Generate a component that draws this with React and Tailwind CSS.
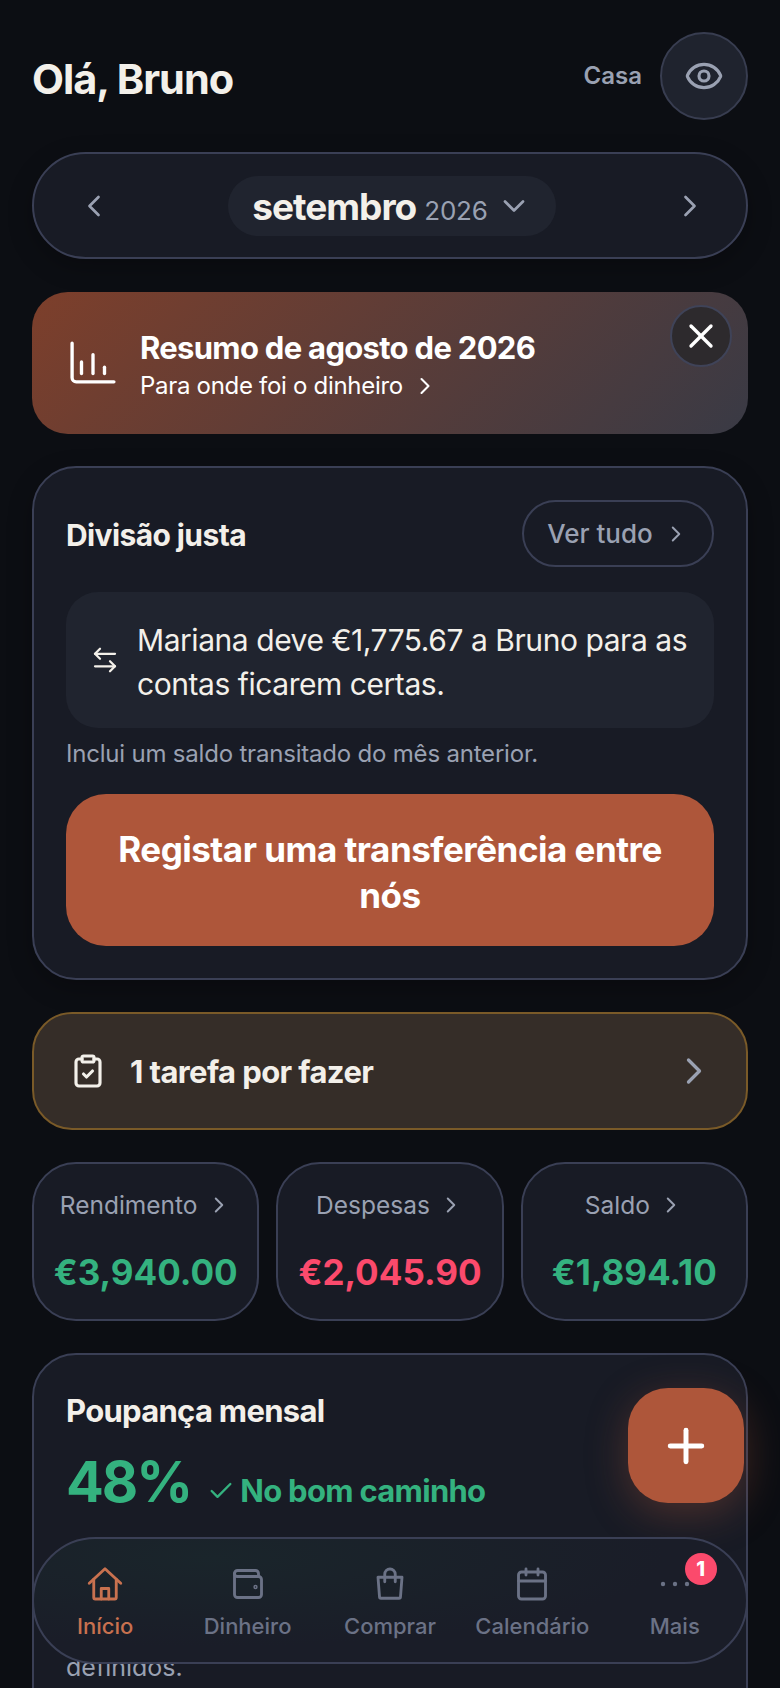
import React from 'react';
import { Eye, ChevronLeft, ChevronRight, ChevronDown, X, ArrowLeftRight, ClipboardCheck, Check, Plus, Calendar } from 'lucide-react';

// Icons the package has no close match for
const BarsIcon = () => (
  <svg width="46" height="46" viewBox="0 0 44 44" fill="none" stroke="currentColor" strokeWidth="3.2" strokeLinecap="round" strokeLinejoin="round">
    <path d="M2 3v33a4 4 0 0 0 4 4h36" />
    <path d="M11 21v11" />
    <path d="M22 14v18" />
    <path d="M33 26v6" />
  </svg>
);

const HomeIcon = () => (
  <svg width="36" height="36" viewBox="0 0 24 24" fill="none" stroke="currentColor" strokeWidth="1.9" strokeLinecap="round" strokeLinejoin="round">
    <path d="M1.5 11.5 12 1.8l10.5 9.7" />
    <path d="M4.5 9v12a1 1 0 0 0 1 1h13a1 1 0 0 0 1-1V9" />
    <path d="M9.5 22v-7h5v7" />
  </svg>
);

const WalletIcon = () => (
  <svg width="36" height="36" viewBox="0 0 24 24" fill="none" stroke="currentColor" strokeWidth="1.9" strokeLinecap="round" strokeLinejoin="round">
    <path d="M5 7h14a2 2 0 0 1 2 2v10a2 2 0 0 1-2 2H5a2 2 0 0 1-2-2V5a2 2 0 0 1 2-2h12a2 2 0 0 1 2 2v2" />
    <path d="M3 5a2 2 0 0 0 2 2" />
    <circle cx="17" cy="14" r="0.5" />
  </svg>
);

const BagIcon = () => (
  <svg width="36" height="36" viewBox="0 0 24 24" fill="none" stroke="currentColor" strokeWidth="1.9" strokeLinecap="round" strokeLinejoin="round">
    <path d="M4 7.5h16l-1 13a1 1 0 0 1-1 1H6a1 1 0 0 1-1-1z" />
    <path d="M8.5 10.5V5.5a3.5 3.5 0 0 1 7 0v5" />
  </svg>
);

const DotsIcon = () => (
  <svg width="36" height="36" viewBox="0 0 36 36" fill="currentColor">
    <circle cx="6" cy="18" r="2.2" />
    <circle cx="18" cy="18" r="2.2" />
    <circle cx="30" cy="18" r="2.2" />
  </svg>
);

const stats = [
  { label: 'Rendimento', value: '€3,940.00', color: 'text-[#34b27f]' },
  { label: 'Despesas', value: '€2,045.90', color: 'text-[#fb4a6c]' },
  { label: 'Saldo', value: '€1,894.10', color: 'text-[#34b27f]' },
];

const navItems = [
  { label: 'Início', icon: <HomeIcon />, active: true },
  { label: 'Dinheiro', icon: <WalletIcon /> },
  { label: 'Comprar', icon: <BagIcon /> },
  { label: 'Calendário', icon: <Calendar size={36} strokeWidth={1.9} /> },
  { label: 'Mais', icon: <DotsIcon />, badge: 1 },
];

const App = () => {
  return (
    <div className="relative h-screen w-full overflow-hidden bg-[#0c0e13] font-['Inter',sans-serif] text-[#f3f0ea]">
      <div className="flex flex-col px-8 pt-8">
        {/* Header */}
        <div className="flex items-center justify-between">
          <h1 className="mt-[3px] -mb-[3px] text-[41.5px] font-bold leading-[88px] tracking-[-1px]">Olá, Bruno</h1>
          <div className="flex items-center gap-[18px]">
            <span className="text-[24px] font-semibold text-[#9aa1b2]">Casa</span>
            <button className="flex h-[88px] w-[88px] items-center justify-center rounded-full border-2 border-[#383d50] bg-[#1f232e] text-[#9aa1b2]">
              <Eye size={40} strokeWidth={1.9} />
            </button>
          </div>
        </div>

        {/* Month selector */}
        <div className="mt-8 flex h-[107px] items-center justify-between rounded-full border-2 border-[#3a3f55] bg-[#181b25] pl-[42px] pr-[38px] shadow-[0_8px_24px_rgba(0,0,0,0.25)]">
          <ChevronLeft size={36} strokeWidth={1.8} className="text-[#9aa1b2]" />
          <div className="flex h-[60px] w-[328px] items-center justify-center gap-[8px] rounded-full bg-[#20242f]">
            <div className="flex items-baseline gap-[8px] pt-[3px]">
              <span className="text-[37px] font-bold tracking-[-1px]">setembro</span>
              <span className="text-[26px] tracking-[-0.2px] text-[#9aa1b2]">2026</span>
            </div>
            <ChevronDown size={36} strokeWidth={1.8} className="text-[#9aa1b2]" />
          </div>
          <ChevronRight size={36} strokeWidth={1.8} className="text-[#9aa1b2]" />
        </div>

        {/* Last month summary */}
        <div className="relative mt-[33px] flex h-[142px] items-center gap-[24px] rounded-[36px] bg-[linear-gradient(135deg,#7d3f2b,#393a45)] pl-[38px] text-white">
          <BarsIcon />
          <div className="flex flex-col pt-[3px]">
            <span className="text-[31px] font-bold leading-[42px] tracking-[-0.7px]">Resumo de agosto de 2026</span>
            <span className="flex items-center gap-[8px] text-[24px] leading-[34px] tracking-[-0.3px]">
              Para onde foi o dinheiro
              <ChevronRight size={28} strokeWidth={1.8} />
            </span>
          </div>
          <button className="absolute right-[16px] top-[13px] flex h-[62px] w-[62px] items-center justify-center rounded-full border-2 border-[#3f4358] bg-[#2d2a2d]">
            <X size={40} strokeWidth={2} />
          </button>
        </div>

        {/* Fair split */}
        <div className="mt-8 rounded-[44px] border-2 border-[#3a3f55] bg-[#181b25] px-8 pb-8 pt-8 shadow-[0_8px_24px_rgba(0,0,0,0.25)]">
          <div className="flex items-center justify-between">
            <h2 className="pt-[4px] text-[30px] font-bold tracking-[-0.6px]">Divisão justa</h2>
            <button className="flex h-[67px] w-[192px] items-center justify-center gap-[10px] rounded-full border-2 border-[#3a3f55] text-[26px] font-medium text-[#9aa1b2]">
              Ver tudo
              <ChevronRight size={26} strokeWidth={1.8} />
            </button>
          </div>
          <div className="mt-[25px] flex h-[136px] items-center gap-[17px] rounded-[32px] bg-[#20242f] pl-[24px]">
            <ArrowLeftRight size={30} strokeWidth={1.8} className="shrink-0 text-[#f3f0ea]" />
            <p className="w-[565px] pt-[3px] text-[30px] leading-[44px] tracking-[-0.45px]">Mariana deve €1,775.67 a Bruno para as contas ficarem certas.</p>
          </div>
          <p className="mt-[10px] text-[24px] leading-[32px] tracking-[-0.2px] text-[#9aa1b2]">Inclui um saldo transitado do mês anterior.</p>
          <button className="mt-[24px] flex h-[152px] w-full items-center justify-center rounded-[40px] bg-[#ae563a] px-8 pt-[4px] text-center text-[35px] font-bold leading-[46px] tracking-[-0.5px] text-white">
            Registar uma transferência entre nós
          </button>
        </div>

        {/* Tasks */}
        <div className="mt-[32px] flex h-[118px] items-center rounded-[40px] border-2 border-[#7a5a28] bg-[#352d28] pl-[36px] pr-[30px]">
          <ClipboardCheck size={36} strokeWidth={2.1} className="shrink-0" />
          <span className="ml-[24px] flex-1 pt-[3px] text-[31px] font-bold tracking-[-0.6px]">1 tarefa por fazer</span>
          <ChevronRight size={44} strokeWidth={1.8} className="text-[#9aa1b2]" />
        </div>

        {/* Month totals */}
        <div className="mt-8 grid grid-cols-3 gap-[17px]">
          {stats.map(s => (
            <div key={s.label} className="flex h-[159px] flex-col items-center rounded-[44px] border-2 border-[#3a3f55] bg-[#181b25] pt-[23px]">
              <span className="flex items-center gap-[8px] text-[24.5px] leading-[36px] text-[#9aa1b2]">
                {s.label}
                <ChevronRight size={26} strokeWidth={1.8} />
              </span>
              <span className={`mt-[27px] text-[35px] font-bold leading-[44px] ${s.color}`}>{s.value}</span>
            </div>
          ))}
        </div>

        {/* Monthly savings, the rest of it sits behind the nav */}
        <div className="mt-8 h-[400px] rounded-[44px] border-2 border-[#3a3f55] bg-[#181b25] px-8 pt-[34px]">
          <h2 className="text-[31px] font-bold leading-[44px] tracking-[-0.7px]">Poupança mensal</h2>
          <div className="mt-[14px] flex items-baseline">
            <span className="text-[56px] font-bold leading-[70px] tracking-[-2px] text-[#34b27f]">48%</span>
            <Check size={28} strokeWidth={2} className="ml-[16px] mb-[12px] self-end text-[#34b27f]" />
            <span className="ml-[5px] text-[31px] font-bold tracking-[-0.7px] text-[#34b27f]">No bom caminho</span>
          </div>
          <p className="mt-[132px] text-[25px] leading-[36px] text-[#9aa1b2]">definidos.</p>
        </div>
      </div>

      {/* Add button */}
      <button className="absolute left-[628px] top-[1388px] flex h-[115px] w-[116px] items-center justify-center rounded-[40px] bg-[#ae563a] text-white shadow-[0_10px_40px_rgba(174,86,58,0.35)]">
        <Plus size={54} strokeWidth={2.2} />
      </button>

      {/* Bottom navigation */}
      <nav className="absolute left-8 right-8 top-[1537px] grid h-[127px] grid-cols-5 rounded-full border-2 border-[#3a3f55] bg-[radial-gradient(ellipse_at_25%_15%,#1a252b,#1a1d28_60%)]">
        {navItems.map(item => (
          <div key={item.label} className={`relative flex flex-col items-center pt-[27px] ${item.active ? 'text-[#c8714f]' : 'text-[#6b7286]'}`}>
            {item.icon}
            <span className="mt-[8px] text-[22px] font-medium leading-[32px]">{item.label}</span>
            {item.badge && (
              <span className="absolute left-[81px] top-[14px] flex h-[32px] w-[32px] items-center justify-center rounded-full bg-[#fb4a6c] text-[20px] font-extrabold text-white">
                {item.badge}
              </span>
            )}
          </div>
        ))}
      </nav>
    </div>
  );
};

export default App;
